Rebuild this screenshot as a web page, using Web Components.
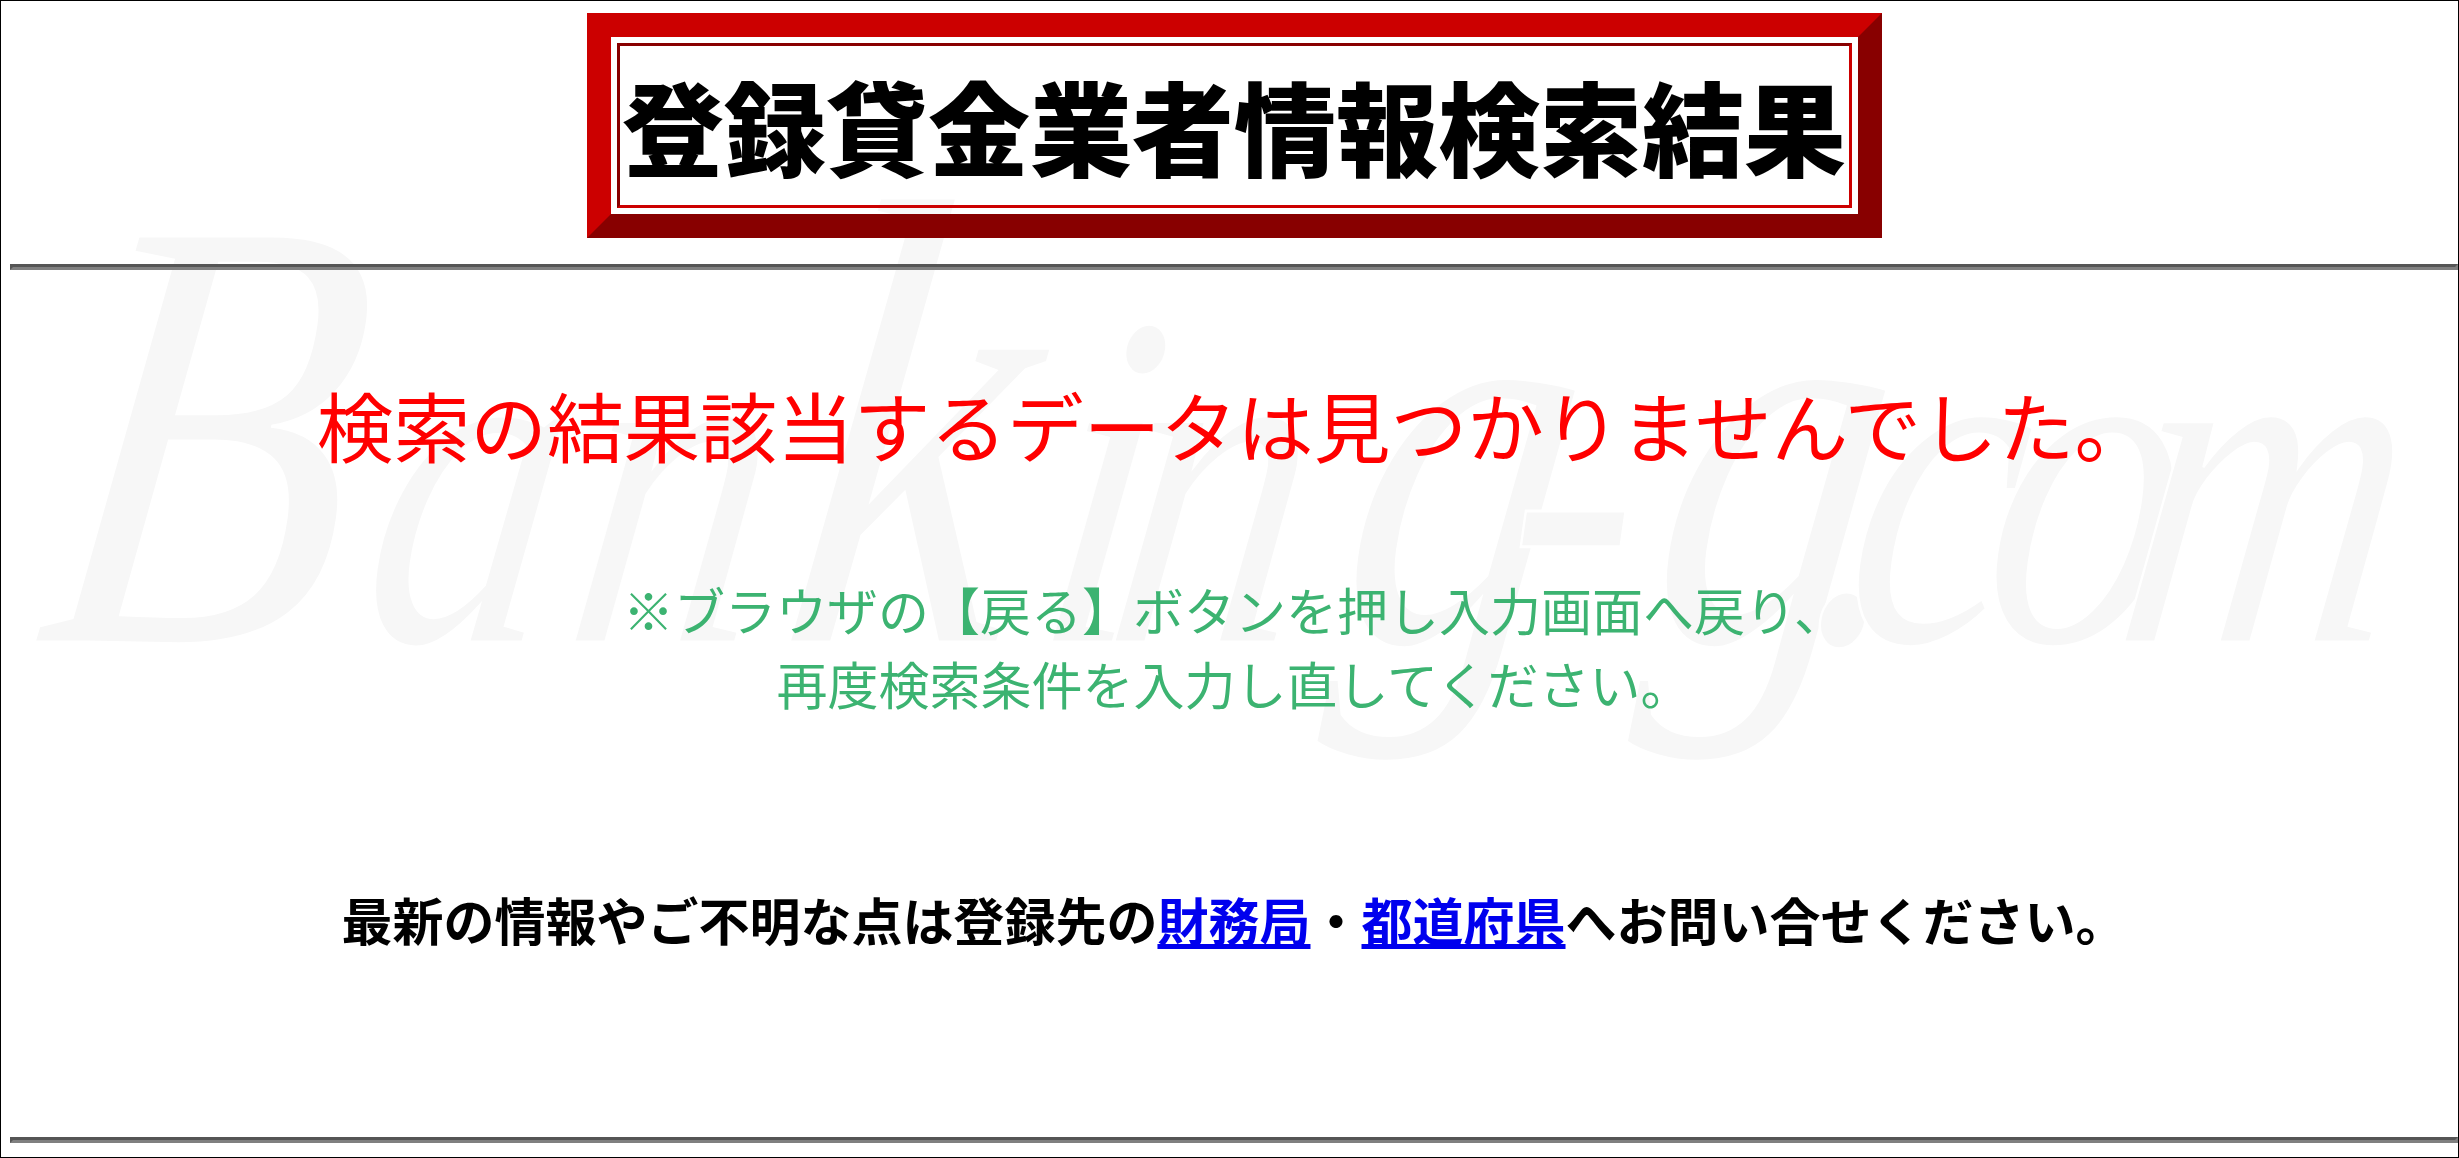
<!DOCTYPE html>
<html lang="ja">
<head>
<meta charset="utf-8">
<title>登録貸金業者情報検索結果</title>
<style>
  html, body { margin: 0; padding: 0; background: #fff; overflow: hidden; }
</style>
</head>
<body>
<result-page>
  <title-banner>登録貸金業者情報検索結果</title-banner>
  <inset-rule style="margin-top:26px"></inset-rule>
  <notice-text size="76.7" color="#ff0000" lh="100" style="margin-top:104px">検索の結果該当するデータは見つかりませんでした。</notice-text>
  <notice-text size="51" color="#3cb371" lh="74" style="margin-top:98px">※ブラウザの【戻る】ボタンを押し入力画面へ戻り、<br>再度検索条件を入力し直してください。</notice-text>
  <notice-text size="51" color="#000" lh="80" bold style="margin-top:159px">最新の情報やご不明な点は登録先の<a href="#zaimu" style="color:#0000ee">財務局</a>・<a href="#todofuken" style="color:#0000ee">都道府県</a>へお問い合せください。</notice-text>
  <inset-rule style="margin-top:auto;margin-bottom:14px"></inset-rule>
</result-page>
<script>
const FONT = '"Noto Sans CJK JP", "Noto Sans", sans-serif';

class ResultPage extends HTMLElement {
  constructor() {
    super();
    this.shadowDOM = this.attachShadow({ mode: 'open' });
  }

  connectedCallback() {
    this.shadowDOM.innerHTML = `
    <style>
      :host {
        display: flex;
        flex-direction: column;
        position: relative;
        isolation: isolate;
        box-sizing: border-box;
        width: 2459px;
        height: 1158px;
        padding: 12px 0 0 9px;
        border: 1px solid #000;
        overflow: hidden;
        background: #fff;
        font-family: ${FONT};
      }
    </style>
    <water-mark></water-mark>
    <slot></slot>
    `;
  }
}

class WaterMark extends HTMLElement {
  constructor() {
    super();
    this.shadowDOM = this.attachShadow({ mode: 'open' });
  }

  connectedCallback() {
    // left edge of each letter, in page pixels, then back to the scaled text units
    const scale = 0.8;
    const edges = [30, 355, 560, 775, 1030, 1100, 1330, 1493, 1640, 1801, 1836, 1973, 2110];
    const xs = edges.map((e) => Math.round((e - 30) / scale)).join(' ');
    this.shadowDOM.innerHTML = `
    <style>
      :host {
        display: block;
        position: absolute;
        left: -1px;
        top: -1px;
        width: 2459px;
        height: 1158px;
        z-index: -1;
        pointer-events: none;
      }
      svg { display: block; }
      text {
        font-family: "Liberation Serif", serif;
        font-style: italic;
        font-size: 480px;
        fill: #f7f7f7;
        stroke: #fff;
        stroke-width: 3px;
      }
      .cap { font-size: 620px; }
      .tall { font-size: 640px; }
      .loop { font-size: 560px; }
    </style>
    <svg width="2459" height="1158" viewBox="0 0 2459 1158">
      <text x="${xs}" y="0" transform="translate(30 642) skewX(-8) scale(${scale} 1)"><tspan class="cap">B</tspan>an<tspan class="tall">k</tspan>in<tspan class="loop">g</tspan>-<tspan class="loop">g</tspan>.com</text>
    </svg>
    `;
  }
}

class TitleBanner extends HTMLElement {
  constructor() {
    super();
    this.shadowDOM = this.attachShadow({ mode: 'open' });
  }

  connectedCallback() {
    this.shadowDOM.innerHTML = `
    <style>
      :host {
        display: block;
        flex: none;
        box-sizing: border-box;
        align-self: center;
        width: 1295px;
        height: 225px;
        padding: 6px;
        border: 24px solid;
        border-color: #cc0000 #880000 #880000 #cc0000;
      }
      .inner {
        display: flex;
        align-items: center;
        justify-content: center;
        box-sizing: border-box;
        height: 100%;
        padding-bottom: 3px;
        border: 3px solid;
        border-color: #880000 #cc0000 #cc0000 #880000;
        font-size: 102px;
        font-weight: 900;
        color: #000;
        white-space: nowrap;
      }
    </style>
    <div class="inner"><slot></slot></div>
    `;
  }
}

class InsetRule extends HTMLElement {
  constructor() {
    super();
    this.shadowDOM = this.attachShadow({ mode: 'open' });
  }

  connectedCallback() {
    this.shadowDOM.innerHTML = `
    <style>
      :host {
        display: block;
        flex: none;
        height: 0;
        border: 3px solid;
        border-color: #555555 #808080 #808080 #555555;
      }
    </style>
    `;
  }
}

class NoticeText extends HTMLElement {
  constructor() {
    super();
    this.shadowDOM = this.attachShadow({ mode: 'open' });
  }

  connectedCallback() {
    const size = this.getAttribute('size');
    const lh = this.getAttribute('lh');
    const color = this.getAttribute('color');
    const weight = this.hasAttribute('bold') ? 700 : 400;
    this.shadowDOM.innerHTML = `
    <style>
      :host {
        display: block;
        flex: none;
        text-align: center;
        white-space: nowrap;
        font-size: ${size}px;
        line-height: ${lh}px;
        font-weight: ${weight};
        color: ${color};
      }
    </style>
    <slot></slot>
    `;
  }
}

customElements.define('result-page', ResultPage);
customElements.define('water-mark', WaterMark);
customElements.define('title-banner', TitleBanner);
customElements.define('inset-rule', InsetRule);
customElements.define('notice-text', NoticeText);
</script>
</body>
</html>
